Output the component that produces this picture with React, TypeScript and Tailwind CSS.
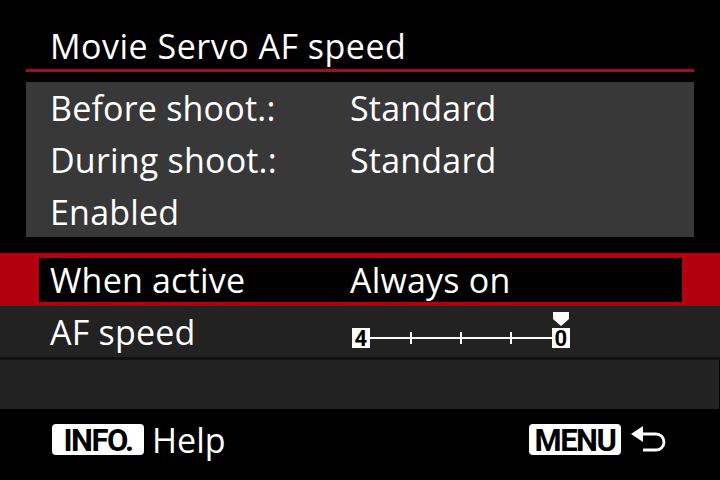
const font = { fontFamily: '"Open Sans", "Noto Sans", sans-serif' }

function Badge({ label }: { label: string }) {
  return (
    <span
      className="inline-flex h-[31px] w-[92px] items-center justify-center rounded-[4px] bg-white pt-[1px] text-[31px] font-bold leading-none tracking-[-1.5px] text-black"
      style={{ fontFamily: 'Roboto, "Liberation Sans", sans-serif' }}
    >
      {label}
    </span>
  )
}

function SpeedScale() {
  return (
    <svg width="224" height="40" viewBox="0 0 224 40" className="block">
      <line x1="20" y1="28" x2="202" y2="28" stroke="white" strokeWidth="2" />
      {[61, 111, 161].map(x => (
        <line key={x} x1={x} y1="22" x2={x} y2="34" stroke="white" strokeWidth="2" />
      ))}
      <rect x="2" y="18" width="18" height="20" fill="white" />
      <text x="11" y="35.5" textAnchor="middle" fontSize="22" fontWeight="700" fontFamily="Roboto, sans-serif" fill="black">4</text>
      <rect x="202" y="18" width="18" height="20" fill="white" />
      <text x="211" y="35.5" textAnchor="middle" fontSize="22" fontWeight="700" fontFamily="Roboto, sans-serif" fill="black">0</text>
      <polygon points="203,2 219,2 219,9 211,16 203,9" fill="white" />
    </svg>
  )
}

function ReturnIcon() {
  return (
    <svg width="38" height="28" viewBox="0 0 38 28">
      <polygon points="1,8 13,0 13,16" fill="white" />
      <path d="M11 8 H26 A8 8 0 0 1 26 24 H13" stroke="white" strokeWidth="2.8" fill="none" />
    </svg>
  )
}

export default function App() {
  return (
    <div className="flex h-[480px] w-[720px] flex-col overflow-hidden bg-black text-white" style={font}>
      <div className="flex h-[69px] items-center pl-[50px] pt-[23px] text-[34px] leading-none tracking-[0.5px]">
        Movie Servo AF speed
      </div>
      <div className="mx-[26px] h-[3px] bg-[#a0111f]" />

      <div className="mx-[26px] mt-[10px] flex h-[155px] flex-col bg-[#383838] text-[34px] leading-none tracking-[0.2px]">
        <div className="flex h-[52px] items-center">
          <span className="w-[324px] pl-[24px]">Before shoot.:</span>
          <span>Standard</span>
        </div>
        <div className="flex h-[52px] items-center">
          <span className="w-[324px] pl-[24px]">During shoot.:</span>
          <span>Standard</span>
        </div>
        <div className="flex h-[51px] items-center">
          <span className="pl-[24px]">Enabled</span>
        </div>
      </div>

      <div className="mt-[16px] flex h-[53px] bg-[#b3000f] pb-[4px] pl-[39px] pr-[38px] pt-[5px] text-[34px] leading-none tracking-[0.2px]">
        <div className="flex flex-1 items-center bg-black">
          <span className="w-[311px] pl-[11px]">When active</span>
          <span>Always on</span>
        </div>
      </div>

      <div className="flex h-[51px] items-center bg-[#222222] text-[34px] leading-none tracking-[0.2px]">
        <span className="w-[350px] pl-[50px]">AF speed</span>
        <div className="-mt-[4px]">
          <SpeedScale />
        </div>
      </div>
      <div className="h-[3px] bg-[#111111]" />
      <div className="mr-[1px] h-[49px] bg-[#222222]" />

      <div className="flex flex-1 items-center justify-between pb-[10px] pl-[52px] pr-[52px] text-[34px] leading-none">
        <div className="flex items-center gap-[8px]">
          <Badge label="INFO." />
          <span>Help</span>
        </div>
        <div className="flex items-center gap-[9px]">
          <Badge label="MENU" />
          <ReturnIcon />
        </div>
      </div>
    </div>
  )
}
